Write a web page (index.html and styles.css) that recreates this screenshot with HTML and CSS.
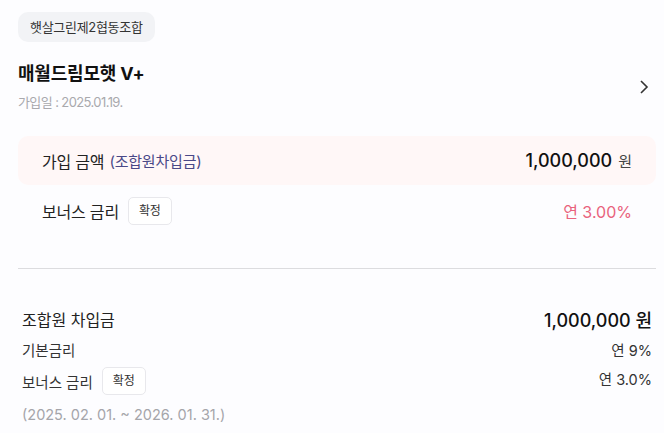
FILE: index.html
```html
<!DOCTYPE html>
<html lang="ko">
<head>
<meta charset="utf-8">
<link rel="stylesheet" href="styles.css">
</head>
<body>
<div class="page">
  <div class="org"><span class="org-badge">햇살그린제2협동조합</span></div>
  <div class="head">
    <div class="head-text">
      <div class="title">매월드림모햇 V+</div>
      <div class="date">가입일 : 2025.01.19.</div>
    </div>
    <svg class="chev" width="12" height="16" viewBox="0 0 12 16"><path d="M3 2 L9 8 L3 14" fill="none" stroke="#333" stroke-width="1.6"/></svg>
  </div>
  <div class="amount-box">
    <div class="lbl">가입 금액 <span class="sub">(조합원차입금)</span></div>
    <div class="val"><span class="num">1,000,000</span> <span class="unit">원</span></div>
  </div>
  <div class="bonus-row">
    <div class="lbl">보너스 금리 <span class="tag">확정</span></div>
    <div class="rate">연 3.00%</div>
  </div>
  <div class="divider"></div>
  <div class="detail">
    <div class="drow main">
      <div>조합원 차입금</div>
      <div class="dnum">1,000,000 원</div>
    </div>
    <div class="drow small">
      <div>기본금리</div>
      <div>연 9%</div>
    </div>
    <div class="drow small top">
      <div class="lbl2">보너스 금리 <span class="tag">확정</span></div>
      <div class="r3">연 3.0%</div>
    </div>
    <div class="period">(2025. 02. 01. ~ 2026. 01. 31.)</div>
  </div>
</div>
</body>
</html>
```

FILE: styles.css
```css
* { box-sizing: border-box; }
html, body { margin: 0; padding: 0; }
body {
  background: #fdfdff;
  font-family: Inter, "Noto Sans CJK KR", sans-serif;
  color: #222;
  width: 664px;
  height: 433px;
  overflow: hidden;
}
.page { padding: 12px 8px 0 18px; }
.org-badge {
  display: inline-block;
  background: #f2f3f6;
  color: #333;
  font-size: 13px;
  line-height: 30px;
  height: 30px;
  padding: 0 12px;
  border-radius: 10px;
  letter-spacing: -0.3px;
}
.head {
  display: flex;
  align-items: center;
  justify-content: space-between;
  margin-top: 18px;
  padding-right: 6px;
}
.title {
  font-size: 18px;
  font-weight: 700;
  line-height: 28px;
  color: #111;
  letter-spacing: -0.2px;
}
.date {
  font-size: 13px;
  color: #a9a9ad;
  line-height: 18px;
  margin-top: 5px;
  letter-spacing: -0.6px;
}
.chev { margin-top: 2px; }
.amount-box {
  margin-top: 25px;
  background: #fff7f7;
  border-radius: 10px;
  height: 49px;
  display: flex;
  align-items: center;
  justify-content: space-between;
  padding: 0 24px 0 24px;
}
.lbl { font-size: 16px; color: #222; letter-spacing: -0.2px; display: flex; align-items: center; }
.sub { font-size: 15px; color: #4a4887; margin-left: 5px; }
.val { display: flex; align-items: baseline; }
.num { font-size: 18px; font-weight: 500; color: #111; }
.unit { font-size: 15px; color: #444; margin-left: 6px; }
.bonus-row {
  display: flex;
  align-items: center;
  justify-content: space-between;
  padding: 0 24px;
  height: 52px;
}
.tag {
  display: inline-block;
  font-size: 12px;
  color: #333;
  background: #fff;
  border: 1px solid #e8e8ec;
  border-radius: 5px;
  height: 28px;
  line-height: 26px;
  padding: 0 10px;
  margin-left: 9px;
}
.rate { font-size: 16px; color: #e9637d; }
.divider {
  height: 1px;
  background: #dcdcdf;
  margin-top: 31px;
}
.detail { padding: 37px 4px 0 4px; }
.drow {
  display: flex;
  justify-content: space-between;
  align-items: center;
}
.drow.main { font-size: 16px; color: #222; height: 26px; }
.dnum { font-size: 18px; color: #111; font-weight: 500; }
.drow.small { font-size: 14.5px; color: #333; height: 20px; margin-top: 7px; }
.drow.top { margin-top: 12px; }
.lbl2 { display: flex; align-items: center; }
.r3 { margin-top: -6px; }
.period { font-size: 14.5px; color: #a5a5aa; margin-top: 14px; line-height: 20px; }
```
